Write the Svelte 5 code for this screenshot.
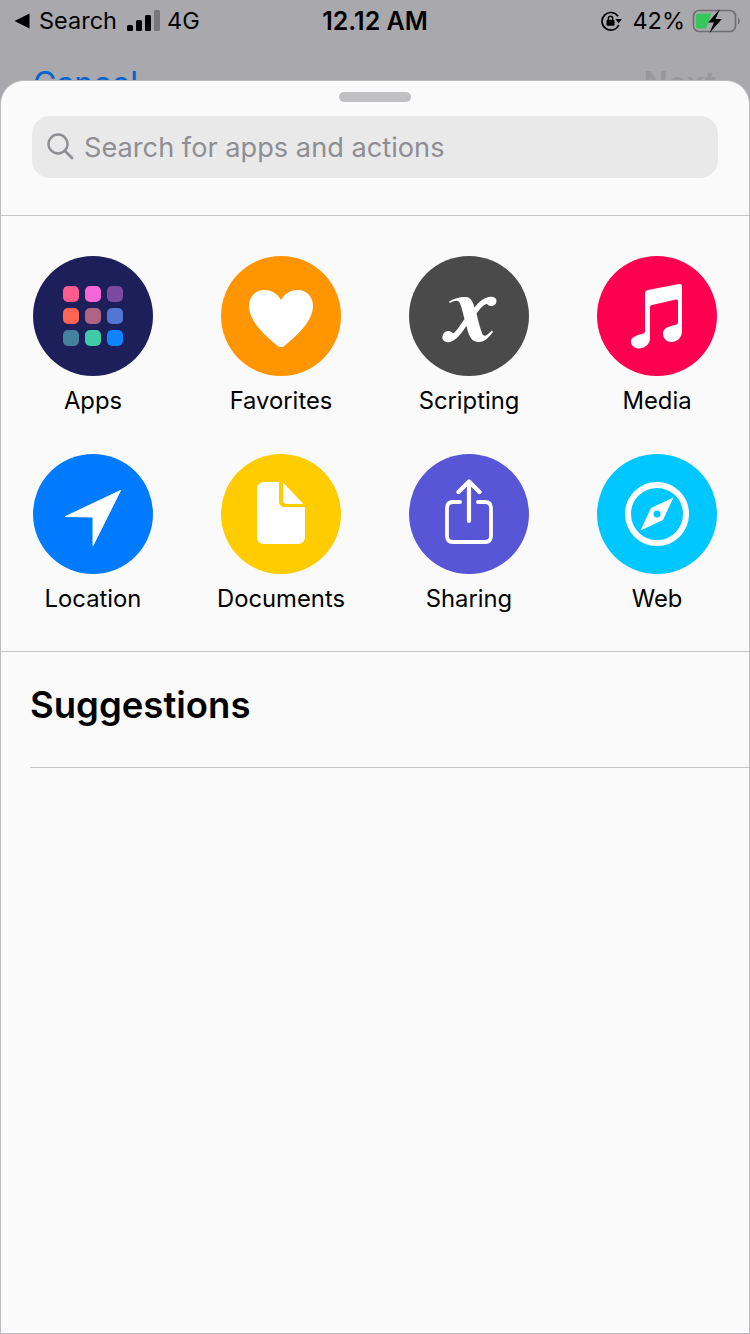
<script>
  const appColors = ['#ff5c8d', '#f766d6', '#7b4a9e', '#ff6455', '#ae6482', '#5376d3', '#43819f', '#3fcba6', '#0f84ff'];
  const categories = [
    { label: 'Apps', color: '#1c1f5a', icon: 'apps' },
    { label: 'Favorites', color: '#ff9500', icon: 'heart' },
    { label: 'Scripting', color: '#4a4a4a', icon: 'x' },
    { label: 'Media', color: '#ff0050', icon: 'music' },
    { label: 'Location', color: '#007aff', icon: 'location' },
    { label: 'Documents', color: '#ffcc00', icon: 'doc' },
    { label: 'Sharing', color: '#5856d6', icon: 'share' },
    { label: 'Web', color: '#00c7ff', icon: 'web' }
  ];
</script>

<div class="screen">
  <div class="top">
    <div class="status">
      <div class="status-left">
        <svg class="back" width="16" height="16" viewBox="0 0 16 16"><path d="M15.500 0.500V15.500L0.500 8Z" fill="#000" /></svg>
        <span>Search</span>
        <span class="bars"><i style="height: 6px"></i><i style="height: 11px"></i><i style="height: 16px"></i><i class="off" style="height: 21px"></i></span>
        <span>4G</span>
      </div>
      <div class="status-time">12.12 AM</div>
      <div class="status-right">
        <svg width="22" height="20" viewBox="0 0 22 20">
          <path d="M18 5.200A8.800 8.800 0 1 0 18.800 14" fill="none" stroke="#000" stroke-width="1.700" />
          <path d="M15.500 8H21.800L18.600 12.500Z" fill="#000" />
          <rect x="6.500" y="8.800" width="8" height="6" rx="1.200" fill="#000" />
          <path d="M8.300 9V7.500a2.200 2.200 0 0 1 4.400 0V9" fill="none" stroke="#000" stroke-width="1.400" />
        </svg>
        <span class="pct">42%</span>
        <svg class="battery" width="48" height="24" viewBox="0 0 48 24">
          <rect x="1.500" y="1.500" width="42" height="21" rx="5.500" fill="none" stroke="#6f6f72" stroke-width="1.600" />
          <path d="M46 8.500c1.200.8 1.600 2 1.600 3.500s-.4 2.700-1.600 3.500z" fill="#6f6f72" />
          <path d="M6 4.500H19.500L14 19.500H6a2 2 0 0 1-2-2V6.500a2 2 0 0 1 2-2Z" fill="#34c759" />
          <path d="M28 0 16 13.500H22L17.500 24 30 10H23.500Z" fill="#000" />
        </svg>
      </div>
    </div>
    <div class="nav">
      <span class="cancel">Cancel</span>
      <span class="next">Next</span>
    </div>
  </div>

  <div class="sheet">
    <div class="handle"></div>
    <div class="search">
      <svg width="28" height="28" viewBox="0 0 28 28">
        <circle cx="11" cy="11" r="9.500" fill="none" stroke="#8e8e93" stroke-width="2.400" />
        <path d="M18 18 25 25" stroke="#8e8e93" stroke-width="2.800" stroke-linecap="round" />
      </svg>
      <span>Search for apps and actions</span>
    </div>

    <div class="grid">
      {#each categories as cat}
        <div class="item">
          <div class="circle" style="background: {cat.color}">
            {#if cat.icon === 'apps'}
              <div class="apps">
                {#each appColors as c}
                  <span style="background: {c}"></span>
                {/each}
              </div>
            {:else if cat.icon === 'heart'}
              <svg width="120" height="120" viewBox="0 0 120 120">
                <path d="M60 44C56 37 50 34 43 34C34 34 28 41 28 50C28 66 46 81 56 89.500C58.500 91.500 61.500 91.500 64 89.500C74 81 92 66 92 50C92 41 86 34 77 34C70 34 64 37 60 44Z" fill="#fff" />
              </svg>
            {:else if cat.icon === 'x'}
              <svg width="120" height="120" viewBox="0 0 120 120">
                <path d="M40 45.500C46 42 52 40.500 57 41C62 41.500 64 46 65.500 51.500C70 46 75 41.500 81 40.800C87 40 89 44.500 86.500 48C84 51 79.500 50.500 78 47.800C75 48.500 71 52.500 67.500 57.500C69 64 71 72 73 77C74 80 76 80.500 78.500 78.500L83 74.500L84 76C80 81 76 86 69.500 86C64 86 61 82 59 76L57.500 70C53 76 48 84 41 86C35 87.500 32 83 34 78.500C36 74 42 74 44 77.500C47 76 51 69.500 55.500 63C54 57 52 49 50.500 46.500C49 44 46 44.500 40.800 47Z" fill="#fff" />
              </svg>
            {:else if cat.icon === 'music'}
              <svg width="120" height="120" viewBox="0 0 120 120">
                <path d="M51 34C49 34.400 48 35.500 48 37.500V75.500C48 76.800 47 77.300 45.500 77.800C38.500 79.500 34 81.500 34 85.500C34 89.500 37.500 92.500 41.500 92.500C48 92.500 53 88 53 82V51.500C53 50 53.800 49.300 55 49.100L79 43.500C80.300 43.200 81 43.800 81 45V66.500C81 67.800 80 68.300 78.500 68.800C71 70.500 66 72.500 66 77.500C66 82 69.500 86 74 86C80.500 86 85 81.500 85 75V30.500C85 28.800 84 27.700 82 28.100Z" fill="#fff" />
              </svg>
            {:else if cat.icon === 'location'}
              <svg width="120" height="120" viewBox="0 0 120 120">
                <path d="M32.500 62.500 87.500 36.500 60 91.500V63Z" fill="#fff" stroke="#fff" stroke-width="1" stroke-linejoin="round" />
              </svg>
            {:else if cat.icon === 'doc'}
              <svg width="120" height="120" viewBox="0 0 120 120">
                <path d="M43 28H58V47C58 50.500 60 53 63.500 53H84V83C84 87 81 90 77 90H43C39 90 36 87 36 83V35C36 31 39 28 43 28Z" fill="#fff" />
                <path d="M62 29.500C62 29 62.500 29 63 29.500L82.500 50H66C63.500 50 62 48.500 62 46Z" fill="#fff" />
              </svg>
            {:else if cat.icon === 'share'}
              <svg width="120" height="120" viewBox="0 0 120 120" fill="none" stroke="#fff" stroke-linecap="round" stroke-linejoin="round">
                <path d="M51 48H44C40 48 38 50 38 54V82C38 86 40 88 44 88H76C80 88 82 86 82 82V54C82 50 80 48 76 48H69" stroke-width="3.800" />
                <path d="M60 67V28M49.500 38 60 27.500 70.500 38" stroke-width="4.200" />
              </svg>
            {:else if cat.icon === 'web'}
              <svg width="120" height="120" viewBox="0 0 120 120">
                <circle cx="60" cy="60" r="29" fill="none" stroke="#fff" stroke-width="6" />
                <path d="M76.500 43.500 66 66 43.500 76.500 54 54Z" fill="#fff" />
                <circle cx="60" cy="60" r="3.500" fill="#00c7ff" />
              </svg>
            {/if}
          </div>
          <span class="label">{cat.label}</span>
        </div>
      {/each}
    </div>

    <div class="suggestions">Suggestions</div>
    <div class="rule"></div>
  </div>
</div>

<style>
  :global(body) {
    margin: 0;
    background: #a9a8ad;
  }
  .screen {
    width: 750px;
    height: 1334px;
    display: flex;
    flex-direction: column;
    overflow: hidden;
    font-family: Inter, "Liberation Sans", sans-serif;
    color: #000;
  }
  .top {
    height: 80px;
    overflow: hidden;
    flex: none;
  }
  .status {
    height: 41px;
    display: flex;
    align-items: center;
    justify-content: space-between;
    padding: 0 10px 0 14px;
    font-size: 23.500px;
    position: relative;
  }
  .status-left {
    display: flex;
    align-items: center;
    gap: 8px;
  }
  .back {
    margin-right: 1px;
  }
  .bars {
    display: flex;
    align-items: flex-end;
    gap: 3px;
    height: 21px;
    margin: 0 -1px 0 2px;
  }
  .bars i {
    width: 6px;
    background: #000;
    border-radius: 1.500px;
  }
  .bars i.off {
    background: #77777a;
  }
  .status-time {
    position: absolute;
    left: 0;
    right: 0;
    text-align: center;
    font-size: 25px;
    font-weight: 600;
    pointer-events: none;
  }
  .status-right {
    display: flex;
    align-items: center;
    gap: 11px;
  }
  .pct {
    margin: 0 -4px 0 -1px;
  }
  .nav {
    display: flex;
    justify-content: space-between;
    padding: 23px 34px 0 33px;
    font-size: 32px;
    line-height: 40px;
  }
  .cancel {
    color: #0062cc;
  }
  .next {
    color: #98979b;
    font-weight: 600;
  }
  .sheet {
    flex: 1;
    background: #fafafa;
    border: 1px solid #bcbcbf;
    border-radius: 24px 24px 0 0;
    box-sizing: border-box;
    display: flex;
    flex-direction: column;
  }
  .handle {
    width: 72px;
    height: 10px;
    border-radius: 5px;
    background: #c0c0c2;
    margin: 11px auto 14px 338px;
  }
  .search {
    margin: 0 31px 37px;
    height: 62px;
    border-radius: 18px;
    background: #e9e9ea;
    display: flex;
    align-items: center;
    gap: 9px;
    padding-left: 15px;
    font-size: 27.200px;
    color: #8e8e93;
  }
  .search span {
    padding-top: 1px;
  }
  .grid {
    display: grid;
    grid-template-columns: repeat(4, 120px);
    column-gap: 68px;
    row-gap: 38px;
    padding: 40px 32px 37px;
    border-top: 1px solid #c6c6c8;
    border-bottom: 1px solid #c6c6c8;
  }
  .item {
    display: flex;
    flex-direction: column;
    align-items: center;
    gap: 10px;
  }
  .circle {
    width: 120px;
    height: 120px;
    border-radius: 50%;
    display: flex;
    align-items: center;
    justify-content: center;
    flex: none;
  }
  .circle svg {
    display: block;
  }
  .apps {
    display: grid;
    grid-template-columns: repeat(3, 16px);
    grid-auto-rows: 16px;
    gap: 6px;
  }
  .apps span {
    border-radius: 5px;
  }
  .label {
    font-size: 23.800px;
    line-height: 30px;
    white-space: nowrap;
  }
  .suggestions {
    margin: 31px 0 0 29px;
    font-size: 36.500px;
    line-height: 44px;
    font-weight: 600;
  }
  .rule {
    margin: 40px 0 0 29px;
    height: 1px;
    background: #c6c6c8;
  }
</style>
